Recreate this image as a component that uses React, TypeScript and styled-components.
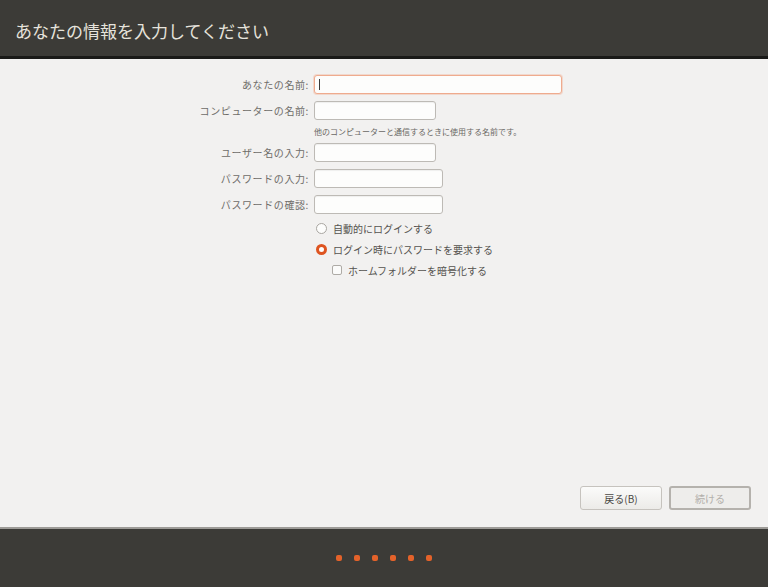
import React from "react";
import styled, { createGlobalStyle } from "styled-components";

const Global = createGlobalStyle`
  html, body { margin: 0; padding: 0; }
  body { font-family: "Noto Sans CJK JP", "Noto Sans", sans-serif; }
`;

const Screen = styled.div`
  width: 768px;
  height: 587px;
  display: flex;
  flex-direction: column;
  background: #f2f1f0;
  overflow: hidden;
`;

const Header = styled.header`
  height: 59px;
  background: #3c3b37;
  border-bottom: 3px solid #1a1a18;
  display: flex;
  align-items: center;
  padding: 4px 0 0 15px;
  box-sizing: border-box;
  flex: none;
`;

const Title = styled.h1`
  margin: 0;
  font-size: 17px;
  font-weight: 400;
  color: #e6e3dc;
  letter-spacing: 0;
`;

const Main = styled.main`
  flex: 1;
  display: flex;
  flex-direction: column;
  padding: 16px 17px 17px 0;
  box-sizing: border-box;
`;

const Form = styled.div`
  display: grid;
  grid-template-columns: 309px auto;
  column-gap: 5px;
  row-gap: 7px;
  align-items: center;
  justify-items: start;
`;

const Label = styled.label`
  justify-self: end;
  font-size: 10px;
  line-height: 12px;
  letter-spacing: 0.6px;
  color: #6e6c68;
`;

const Input = styled.div<{ $w: number; $focused?: boolean }>`
  width: ${(p) => p.$w}px;
  height: 19px;
  box-sizing: border-box;
  background: #fdfdfc;
  border: 1px solid ${(p) => (p.$focused ? "#efab8e" : "#bdbab5")};
  border-radius: 3px;
  box-shadow: ${(p) =>
    p.$focused ? "0 0 0 1px rgba(240,170,140,0.35)" : "inset 0 1px 1px rgba(0,0,0,0.06)"};
  position: relative;
`;

const Caret = styled.span`
  position: absolute;
  left: 4px;
  top: 3px;
  width: 1px;
  height: 11px;
  background: #3a3a3a;
`;

const Hint = styled.div`
  grid-column: 2;
  font-size: 8px;
  line-height: 9px;
  color: #6a6864;
`;

const OptionRow = styled.div<{ $indent?: number }>`
  grid-column: 2;
  height: 14px;
  display: flex;
  align-items: center;
  gap: 6px;
  padding-left: ${(p) => p.$indent ?? 2}px;
  font-size: 10px;
  color: #55534f;
`;

const Radio = styled.span<{ $checked?: boolean }>`
  width: 11px;
  height: 11px;
  box-sizing: border-box;
  border-radius: 50%;
  background: #fdfdfc;
  border: ${(p) => (p.$checked ? "3px solid #de5420" : "1px solid #a9a6a1")};
  flex: none;
`;

const Checkbox = styled.span`
  width: 10px;
  height: 10px;
  box-sizing: border-box;
  border-radius: 2px;
  background: #fbfbfa;
  border: 1px solid #aeaba6;
  flex: none;
`;

const Spacer = styled.div`
  flex: 1;
`;

const Buttons = styled.div`
  display: flex;
  justify-content: flex-end;
  gap: 7px;
`;

const Button = styled.button<{ $disabled?: boolean }>`
  width: 82px;
  height: 24px;
  box-sizing: border-box;
  border-radius: 3px;
  font-family: "Noto Sans CJK JP", "Noto Sans", sans-serif;
  font-size: 10px;
  padding: 0;
  color: ${(p) => (p.$disabled ? "#b2afaa" : "#4a4845")};
  background: ${(p) =>
    p.$disabled ? "#eeedeb" : "linear-gradient(#fbfbfa, #ecebe8)"};
  border: ${(p) => (p.$disabled ? "2px solid #b5b2ad" : "1px solid #c6c3be")};
`;

const Footer = styled.footer`
  height: 60px;
  flex: none;
  border-top: 2px solid #9d9b97;
  background: #3c3b37;
  box-sizing: border-box;
  display: flex;
  align-items: center;
  justify-content: center;
  gap: 12px;
  padding-right: 1px;
`;

const Dot = styled.span`
  width: 6px;
  height: 6px;
  border-radius: 2px;
  background: #e4622a;
`;

const fields: { label: string; w: number; focused?: boolean; hint?: string }[] = [
  { label: "あなたの名前:", w: 248, focused: true },
  {
    label: "コンピューターの名前:",
    w: 122,
    hint: "他のコンピューターと通信するときに使用する名前です。",
  },
  { label: "ユーザー名の入力:", w: 122 },
  { label: "パスワードの入力:", w: 129 },
  { label: "パスワードの確認:", w: 129 },
];

export default function App() {
  return (
    <Screen>
      <Global />
      <Header>
        <Title>あなたの情報を入力してください</Title>
      </Header>
      <Main>
        <Form>
          {fields.map((f) => (
            <React.Fragment key={f.label}>
              <Label>{f.label}</Label>
              <Input $w={f.w} $focused={f.focused}>
                {f.focused && <Caret />}
              </Input>
              {f.hint && <Hint>{f.hint}</Hint>}
            </React.Fragment>
          ))}
          <OptionRow>
            <Radio />
            自動的にログインする
          </OptionRow>
          <OptionRow>
            <Radio $checked />
            ログイン時にパスワードを要求する
          </OptionRow>
          <OptionRow $indent={18}>
            <Checkbox />
            ホームフォルダーを暗号化する
          </OptionRow>
        </Form>
        <Spacer />
        <Buttons>
          <Button>戻る(B)</Button>
          <Button $disabled>続ける</Button>
        </Buttons>
      </Main>
      <Footer>
        {[0, 1, 2, 3, 4, 5].map((i) => (
          <Dot key={i} />
        ))}
      </Footer>
    </Screen>
  );
}
